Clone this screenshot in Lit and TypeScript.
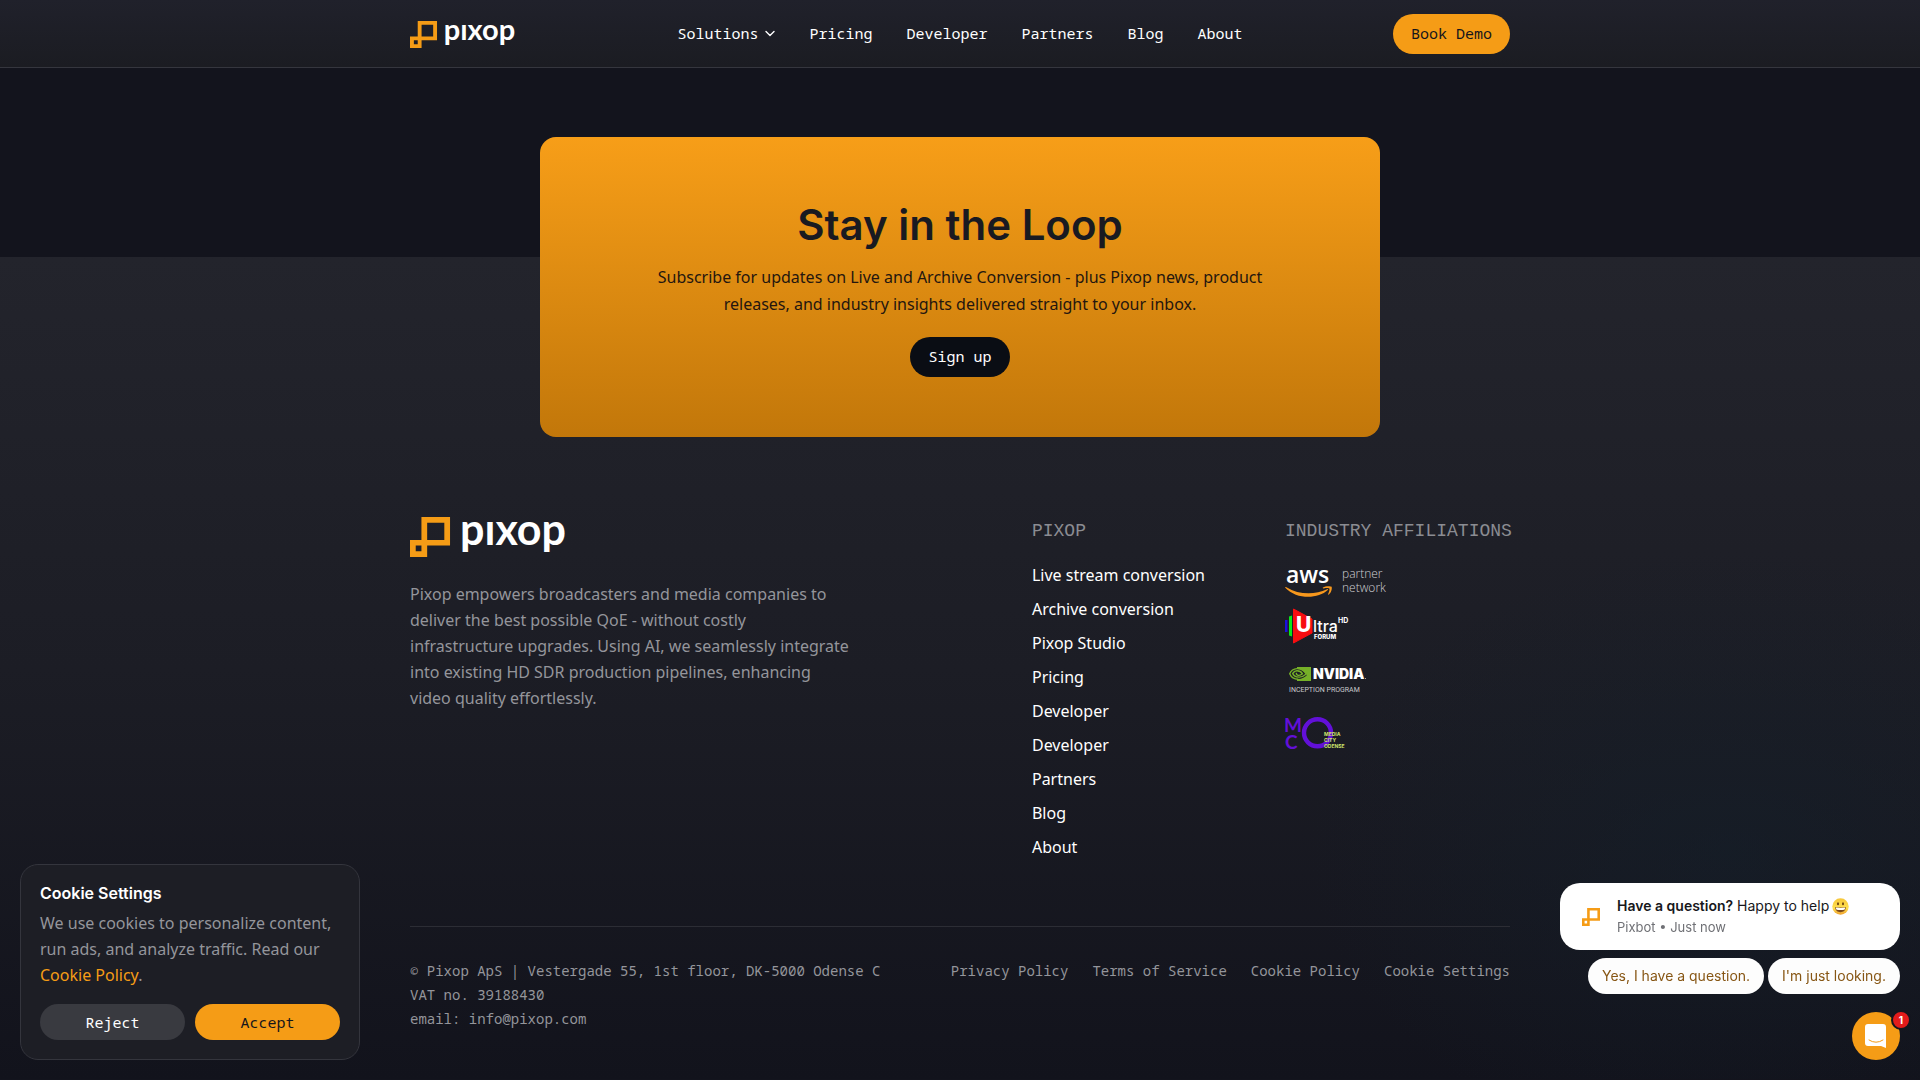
import { LitElement, html, css } from "lit";
import { customElement } from "lit/decorators.js";

const MARK = "M2 0h5v5h-4v2h-3v-3h2zM3 1v3h3v-3zM1 5v1h1v-1z";

const anchor = (label: string) => `#${label.toLowerCase().replace(/ /g, "-")}`;

@customElement("pixop-logo")
class PixopLogo extends LitElement {
  static styles = css`
    :host {
      display: block;
    }
    .logo {
      display: block;
      height: 100%;
      overflow: visible;
    }
    .word {
      font-family: Lato, sans-serif;
      font-weight: 700;
      font-size: 43px;
      fill: #fff;
    }
    .mark {
      fill: #f59c16;
      fill-rule: evenodd;
    }
  `;

  render() {
    return html`<svg class="logo" viewBox="0 0 158 40" role="img" aria-label="Pixop">
      <path class="mark" transform="scale(5.72)" d=${MARK} />
      <text class="word" x="50" y="28">pıxop</text>
    </svg>`;
  }
}

@customElement("affiliation-logos")
class AffiliationLogos extends LitElement {
  static styles = css`
    :host {
      display: block;
    }
    .list {
      list-style: none;
      margin: 0;
      padding: 0;
      display: flex;
      flex-direction: column;
      gap: 12px;
    }
    .item,
    .art {
      display: block;
      overflow: visible;
    }
    .aws {
      font: 600 23px "Open Sans", sans-serif;
      fill: #fff;
    }
    .partner {
      font: 300 12px "Open Sans", sans-serif;
      fill: #d0d0d4;
    }
    .u {
      font: 800 21px Inter, sans-serif;
      fill: #fff;
    }
    .ltra {
      font: 500 16px Inter, sans-serif;
      fill: #fff;
    }
    .hd {
      font: 700 7px Inter, sans-serif;
      fill: #fff;
    }
    .forum {
      font: 800 6px Inter, sans-serif;
      fill: #fff;
    }
    .nvidia {
      font: 900 14px Inter, sans-serif;
      fill: #fff;
    }
    .inception {
      font: 400 7px Roboto, sans-serif;
      fill: #c9c9cd;
    }
    .mc {
      font: 700 19px Lato, sans-serif;
      fill: #6210d8;
    }
    .city {
      font: 700 5px Inter, sans-serif;
      fill: #cfe46c;
    }
  `;

  render() {
    return html`<ul class="list">
      <li class="item">
        <svg class="art" width="102" height="35" role="img" aria-label="AWS partner network">
          <text class="aws" x="1" y="21">aws</text>
          <path d="M0 25.4q.5-.8 1.4-.2C14 33 30 33 42 27.2q1.7-.4.8.8C33 37 12 38 0 25.4z" fill="#f7981d" />
          <path d="M38 25.6c2-1.6 7-1.8 8.600-.8.8 2-.6 6.200-2.800 7.800-.8.4-1 0-.6-.8.8-1.900 1.600-4.200 1.200-5.100s-3.400-.6-5.600-.3c-1 .1-1.400-.3-.8-.8z" fill="#f7981d" />
          <text class="partner" x="57" y="16">partner</text>
          <text class="partner" x="57" y="30">network</text>
        </svg>
      </li>
      <li class="item">
        <svg class="art" width="64" height="34" role="img" aria-label="Ultra HD Forum">
          <path d="M0 11h2.5v12H0z" fill="#1a10e0" />
          <path d="M4 7.5l3-1v21l-3-1z" fill="#0be51c" />
          <path d="M8.5 0L27 10v14L8.500 34z" fill="#f80d10" stroke="#f80d10" stroke-linejoin="round" />
          <text class="u" x="11" y="23">U</text>
          <text class="ltra" x="28" y="23">ltra</text>
          <text class="hd" x="53" y="14">HD</text>
          <text class="forum" x="29" y="30">FORUM</text>
        </svg>
      </li>
      <li class="item">
        <svg class="art" width="82" height="50" role="img" aria-label="NVIDIA Inception Program">
          <path d="M12 12h14v14H12z" fill="#76b028" />
          <path d="M12 14C8 14 5 17 4 19c2 3 5 5 9 5 4 0 7-2 9-4-3-4-6-6-10-6z" fill="#1d1e25" />
          <g fill="none" stroke="#76b028" stroke-width="1.4">
            <path d="M12 13.6C8 13.8 5.600 16.600 4.700 18.800c1.500 3.600 4.600 5.500 8.600 5.500" />
            <path d="M12 13.6c4.600-.2 7.400 2.600 9.300 5.400-2.300 2-4.700 3.200-7.300 3.100-3.400-.1-5.500-1.500-6.300-3.600.9-1.400 2.300-2.700 4.300-2.700 3 0 4.500 1.400 5.500 3-1.600 1.400-3.500 1.900-5 1.300-1.200-.5-1.400-1.500-.9-2.200" />
          </g>
          <text class="nvidia" x="28" y="24">NVIDIA</text>
          <path d="M80 23h1v1h-1z" fill="#aaa" />
          <text class="inception" x="4" y="37">INCEPTION PROGRAM</text>
        </svg>
      </li>
      <li class="item">
        <svg class="art" width="60" height="33" role="img" aria-label="Media City Odense">
          <text class="mc" x="-1" y="15">M</text>
          <text class="mc" x="0" y="32">C</text>
          <circle cx="32.5" cy="15.8" r="13.5" fill="none" stroke="#6210d8" stroke-width="4.400" />
          <text class="city" x="39" y="19">MEDIA</text>
          <text class="city" x="39" y="25">CITY</text>
          <text class="city" x="39" y="31">ODENSE</text>
        </svg>
      </li>
    </ul>`;
  }
}

@customElement("cookie-banner")
class CookieBanner extends LitElement {
  static styles = css`
    :host {
      display: block;
      position: fixed;
      left: 20px;
      bottom: 20px;
      width: 340px;
      box-sizing: border-box;
      padding: 18px 19px 19px;
      border: 1px solid #34353d;
      border-radius: 18px;
      background: #1d1e25;
      color: #94959b;
      font: 16px/26px "Noto Sans", sans-serif;
    }
    .title {
      margin: 0 0 7px;
      color: #fff;
      font: 600 16px/20px Inter, sans-serif;
    }
    .text {
      margin: 0 0 16px;
    }
    .policy {
      color: #f59c16;
      text-decoration: none;
    }
    .actions {
      display: flex;
      gap: 10px;
    }
    .button {
      flex: 1;
      height: 36px;
      border: 0;
      border-radius: 18px;
      background: #393a40;
      color: #fff;
      font: 15px/20px "Noto Sans Mono", "DejaVu Sans Mono", monospace;
    }
    .accept {
      background: #f59c16;
      color: #14151c;
    }
  `;

  render() {
    return html`
      <h2 class="title">Cookie Settings</h2>
      <p class="text">
        We use cookies to personalize content, run ads, and analyze traffic. Read our
        <a class="policy" href="#cookie-policy">Cookie Policy</a>.
      </p>
      <div class="actions">
        <button class="button">Reject</button>
        <button class="button accept">Accept</button>
      </div>
    `;
  }
}

@customElement("chat-widget")
class ChatWidget extends LitElement {
  static styles = css`
    :host {
      position: fixed;
      right: 20px;
      bottom: 20px;
      width: 340px;
      display: flex;
      flex-direction: column;
      align-items: flex-end;
      gap: 8px;
      font: 14px/20px Inter, sans-serif;
    }
    .message {
      box-sizing: border-box;
      width: 100%;
      padding: 12px 22px;
      display: flex;
      align-items: center;
      gap: 17px;
      border-radius: 20px;
      background: #fff;
      color: #17181c;
    }
    .avatar {
      width: 18px;
      height: 18px;
      fill: #f59c16;
      fill-rule: evenodd;
    }
    .line {
      margin: 0;
      display: flex;
      align-items: center;
      gap: 3px;
      line-height: 22px;
    }
    .strong {
      font-weight: 600;
    }
    .emoji {
      width: 17px;
      height: 17px;
    }
    .meta {
      margin: 0;
      color: #6f7075;
      font-size: 13px;
      line-height: 21px;
    }
    .replies {
      display: flex;
      gap: 4px;
      margin-bottom: 10px;
    }
    .reply {
      height: 36px;
      padding: 0 14px;
      border: 0;
      border-radius: 18px;
      background: #fdfdfd;
      color: #875614;
      font: 14px/20px Inter, sans-serif;
    }
    .launcher {
      position: relative;
      width: 48px;
      height: 48px;
      padding: 0;
      border: 0;
      border-radius: 24px;
      background: #f59c16;
    }
    .bubble {
      display: block;
      margin: 0 auto;
    }
    .badge {
      position: absolute;
      top: -2px;
      right: -11px;
      width: 16px;
      height: 16px;
      border: 2px solid #14161e;
      border-radius: 10px;
      background: #e31b1b;
      color: #fff;
      font: 700 10px/16px Inter, sans-serif;
    }
  `;

  render() {
    return html`
      <div class="message">
        <svg class="avatar" viewBox="0 0 7 7" aria-hidden="true"><path d=${MARK} /></svg>
        <div>
          <p class="line">
            <span><span class="strong">Have a question?</span> Happy to help</span>
            <svg class="emoji" viewBox="0 0 17 17" role="img" aria-label="Grinning face">
              <defs>
                <linearGradient id="face" x2="0" y2="1">
                  <stop stop-color="#f6c63a" />
                  <stop offset="0.6" stop-color="#ffe04f" />
                  <stop offset="1" stop-color="#eea02e" />
                </linearGradient>
              </defs>
              <circle cx="8.5" cy="8.5" r="8.2" fill="url(#face)" />
              <ellipse cx="6" cy="5.8" rx="1" ry="1.5" fill="#6b4212" />
              <ellipse cx="11" cy="5.8" rx="1" ry="1.5" fill="#6b4212" />
              <path d="M3.2 9q5.300 1 10.600 0c0 3.400-2.400 5.200-5.300 5.200S3.200 12.400 3.200 9z" fill="#7b4a1c" />
              <path d="M3.8 9.5q4.700.8 9.400 0-.1 1.500-.8 2.200-3.900.8-7.800 0-.7-.8-.8-2.200z" fill="#fff" />
            </svg>
          </p>
          <p class="meta">Pixbot • Just now</p>
        </div>
      </div>
      <div class="replies">
        <button class="reply">Yes, I have a question.</button>
        <button class="reply">I'm just looking.</button>
      </div>
      <button class="launcher" aria-label="Open chat, 1 unread message">
        <svg class="bubble" width="24" height="26" viewBox="0 0 24 26" aria-hidden="true">
          <path d="M4 1h15a3 3 0 0 1 3 3v21l-5-2H4a3 3 0 0 1-3-3V4a3 3 0 0 1 3-3z" fill="#fff" />
          <path d="M5 17q7 4.6 14 0" fill="none" stroke="#f59c16" stroke-linecap="round" />
        </svg>
        <span class="badge">1</span>
      </button>
    `;
  }
}

@customElement("app-root")
class AppRoot extends LitElement {
  static styles = css`
    :host {
      display: block;
      min-height: 100vh;
      background: #13141d;
      color: #fff;
      font: 16px/26px "Noto Sans", sans-serif;
      --mono: "Noto Sans Mono", "DejaVu Sans Mono", monospace;
    }
    a {
      color: inherit;
      text-decoration: none;
    }
    .container {
      box-sizing: border-box;
      max-width: 1100px;
      margin: 0 auto;
    }
    .header {
      position: sticky;
      top: 0;
      background: linear-gradient(#20212b, #1b1c22);
      border-bottom: 1px solid #35363e;
    }
    .bar {
      display: grid;
      grid-template-columns: 1fr auto 1fr;
      align-items: center;
      padding: 14px 0 13px;
    }
    .brand {
      width: 107px;
      height: 27px;
    }
    .nav {
      display: flex;
      align-items: center;
      gap: 34px;
      padding-bottom: 2px;
      font: 15px/20px var(--mono);
    }
    .menu {
      display: flex;
      align-items: center;
      gap: 7px;
      padding: 0;
      border: 0;
      background: none;
      color: inherit;
      font: inherit;
    }
    .pill {
      justify-self: end;
      padding: 9px 18px 11px;
      border-radius: 20px;
      background: #f59c16;
      color: #14151c;
      font: 15px/20px var(--mono);
    }
    .dark {
      background: #0a0d14;
      color: #fff;
    }
    .intro {
      padding: 69px 20px 0;
    }
    .card {
      position: relative;
      box-sizing: border-box;
      max-width: 840px;
      margin: 0 auto -180px;
      padding: 60px 100px;
      display: flex;
      flex-direction: column;
      align-items: center;
      border-radius: 16px;
      background: linear-gradient(#f79e18, #c2770a);
      color: #191a21;
      text-align: center;
    }
    .headline {
      margin: 0 0 11px;
      font: 600 42px/56px Inter, sans-serif;
    }
    .lead {
      margin: 0 0 19px;
      line-height: 27px;
      color: #24160f;
    }
    .footer {
      padding: 260px 20px 48px;
      background: radial-gradient(ellipse 420px 300px at 90% 72%, #14202b80, #14202b00),
        linear-gradient(#23242c, #1c1d25 50%, #12131c);
    }
    .columns {
      display: grid;
      grid-template-columns: 1fr auto 225px;
      gap: 80px;
      padding-bottom: 66px;
      border-bottom: 1px solid #2c2d35;
    }
    .wordmark {
      width: 158px;
      height: 40px;
      margin-bottom: 24px;
    }
    .about {
      max-width: 440px;
      margin: 0;
      color: #94959b;
    }
    .caption {
      margin: 0 0 17px;
      color: #8b8c92;
      font: 400 18px/28px "Liberation Mono", monospace;
      text-transform: uppercase;
      white-space: nowrap;
    }
    .links {
      list-style: none;
      margin: 0;
      padding: 0;
      display: flex;
      flex-direction: column;
      gap: 8px;
    }
    .legal {
      display: flex;
      justify-content: space-between;
      padding-top: 32px;
      color: #94959b;
      font: 14px/24px var(--mono);
    }
    .address {
      margin: 0;
      font-style: normal;
    }
    .row {
      display: flex;
      gap: 24px;
    }
  `;

  private navItems = ["Pricing", "Developer", "Partners", "Blog", "About"];
  private footerItems = [
    "Live stream conversion",
    "Archive conversion",
    "Pixop Studio",
    "Pricing",
    "Developer",
    "Developer",
    "Partners",
    "Blog",
    "About",
  ];
  private legalItems = ["Privacy Policy", "Terms of Service", "Cookie Policy", "Cookie Settings"];

  render() {
    return html`
      <header class="header">
        <div class="container bar">
          <a class="brand" href="#home"><pixop-logo class="brand"></pixop-logo></a>
          <nav class="nav" aria-label="Main">
            <button class="menu" aria-haspopup="true">
              Solutions
              <svg width="10" height="10" viewBox="0 0 10 10" aria-hidden="true">
                <path
                  d="M1 3.5l4 4 4-4"
                  fill="none"
                  stroke="#fff"
                  stroke-width="1.4"
                  stroke-linecap="round"
                  stroke-linejoin="round"
                />
              </svg>
            </button>
            ${this.navItems.map((label) => html`<a href=${anchor(label)}>${label}</a>`)}
          </nav>
          <a class="pill" href="#demo">Book Demo</a>
        </div>
      </header>
      <main class="intro">
        <section class="card">
          <h1 class="headline">Stay in the Loop</h1>
          <p class="lead">
            Subscribe for updates on Live and Archive Conversion - plus Pixop news, product
            releases, and industry insights delivered straight to your inbox.
          </p>
          <a class="pill dark" href="#signup">Sign up</a>
        </section>
      </main>
      <footer class="footer">
        <div class="container">
          <div class="columns">
            <div>
              <pixop-logo class="wordmark"></pixop-logo>
              <p class="about">
                Pixop empowers broadcasters and media companies to deliver the best possible QoE -
                without costly infrastructure upgrades. Using AI, we seamlessly integrate into
                existing HD SDR production pipelines, enhancing video quality effortlessly.
              </p>
            </div>
            <nav aria-label="Footer">
              <h2 class="caption">Pixop</h2>
              <ul class="links">
                ${this.footerItems.map((label) => html`<li><a href=${anchor(label)}>${label}</a></li>`)}
              </ul>
            </nav>
            <section>
              <h2 class="caption">Industry affiliations</h2>
              <affiliation-logos></affiliation-logos>
            </section>
          </div>
          <div class="legal">
            <address class="address">
              © Pixop ApS | Vestergade 55, 1st floor, DK-5000 Odense C<br />
              VAT no. 39188430<br />
              email: <a href="mailto:info@pixop.com">info@pixop.com</a>
            </address>
            <nav class="row" aria-label="Legal">
              ${this.legalItems.map((label) => html`<a href=${anchor(label)}>${label}</a>`)}
            </nav>
          </div>
        </div>
      </footer>
      <cookie-banner></cookie-banner>
      <chat-widget></chat-widget>
    `;
  }
}
